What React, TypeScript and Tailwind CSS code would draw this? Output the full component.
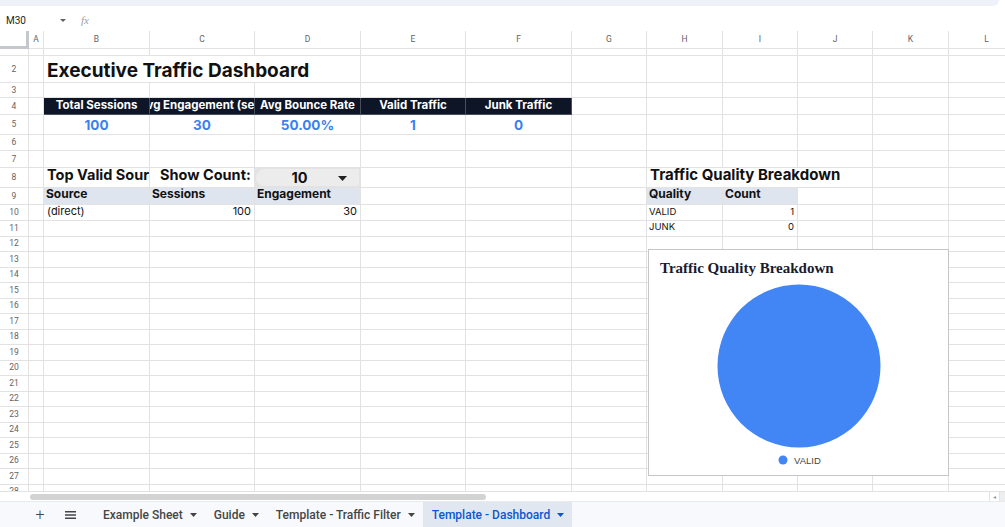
import React from "react";

const COLS = [15, 106, 105, 106, 105, 106, 75, 76, 75, 75, 76, 76];
const LETTERS = ["A", "B", "C", "D", "E", "F", "G", "H", "I", "J", "K", "L"];

type Cell = { span?: number; node?: React.ReactNode; cls?: string };

const FONT = "font-['Inter','Open_Sans',sans-serif]";

function Row({
  h,
  label,
  cells = {},
}: {
  h: number;
  label: string;
  cells?: Record<number, Cell>;
}) {
  const out: React.ReactNode[] = [];
  for (let i = 0; i < COLS.length; i++) {
    const c = cells[i];
    const span = c?.span ?? 1;
    let w = 0;
    for (let k = i; k < i + span; k++) w += COLS[k];
    out.push(
      <div
        key={i}
        style={{ width: w }}
        className={`shrink-0 border-r border-b border-[#e2e2e2] flex overflow-hidden whitespace-nowrap ${
          c?.cls ?? ""
        }`}
      >
        {c?.node}
      </div>
    );
    i += span - 1;
  }
  return (
    <div style={{ height: h }} className="flex shrink-0">
      <div className="w-[29px] shrink-0 border-r border-b border-[#e2e2e2] flex items-center justify-center text-[8.5px] text-[#5f6368] font-['Roboto',sans-serif] overflow-hidden">
        {label}
      </div>
      {out}
    </div>
  );
}

const kpiHead = (t: string) => ({
  node: <span>{t}</span>,
  cls: "bg-[#0d1527] text-white font-bold text-[11.5px] items-center justify-center border-r-[#4a4f5c] border-b-[#4a4f5c]",
});
const kpiVal = (t: string) => ({
  node: <span>{t}</span>,
  cls: "text-[#3b7ff0] font-bold text-[13.5px] items-center justify-center pt-[1px]",
});
const tblHead = (t: string) => ({
  node: <span className="pl-[2px]">{t}</span>,
  cls: "bg-[#dfe5ee] font-bold text-[12px] text-[#111] items-end pb-[1px]",
});

export default function App() {
  const small: Record<number, Cell> = {};
  return (
    <div className={`w-[1005px] h-[527px] overflow-hidden bg-white flex flex-col ${FONT}`}>
      {/* toolbar remnant */}
      <div className="h-[9px] shrink-0 bg-white">
        <div className="h-[6px] mr-[6px] bg-[#eef2f8] rounded-br-[8px]" />
      </div>
      {/* formula bar */}
      <div className="h-[22px] shrink-0 flex items-center font-['Roboto',sans-serif] text-[#1f1f1f]">
        <div className="w-[58px] pl-[6px] text-[10px]">M30</div>
        <svg width="8" height="5" viewBox="0 0 8 5" className="ml-[1px]">
          <path d="M1 1 L4 4 L7 1 Z" fill="#5f6368" />
        </svg>
        <span className="ml-[14px] text-[11px] italic text-[#9aa0a6] font-['Liberation_Serif',serif]">fx</span>
      </div>

      {/* grid */}
      <div className="h-[460px] shrink-0 relative overflow-hidden">
        {/* column headers */}
        <div className="flex h-[18px]">
          <div className="w-[29px] shrink-0 border-r-[3px] border-b-[3px] border-[#c4c7cc] bg-white" />
          {COLS.map((w, i) => (
            <div
              key={i}
              style={{ width: w }}
              className="shrink-0 border-r border-b border-[#e2e2e2] flex items-center justify-center text-[8.5px] text-[#5f6368] font-['Roboto',sans-serif]"
            >
              {LETTERS[i]}
            </div>
          ))}
        </div>
        <Row h={7} label="" />
        <Row
          h={27}
          label="2"
          cells={{
            1: {
              span: 3,
              node: <span className="pl-[3px] text-[19px] font-bold text-[#111] leading-none">Executive Traffic Dashboard</span>,
              cls: "items-center pt-[2px]",
            },
          }}
        />
        <Row h={15} label="3" />
        <Row
          h={17}
          label="4"
          cells={{
            1: kpiHead("Total Sessions"),
            2: kpiHead("Avg Engagement (sec)"),
            3: kpiHead("Avg Bounce Rate"),
            4: kpiHead("Valid Traffic"),
            5: kpiHead("Junk Traffic"),
          }}
        />
        <Row
          h={20}
          label="5"
          cells={{
            1: kpiVal("100"),
            2: kpiVal("30"),
            3: kpiVal("50.00%"),
            4: kpiVal("1"),
            5: kpiVal("0"),
          }}
        />
        <Row h={16} label="6" />
        <Row h={17} label="7" />
        <Row
          h={20}
          label="8"
          cells={{
            1: {
              node: <span className="pl-[3px]">Top Valid Sources</span>,
              cls: "font-bold text-[14.5px] text-[#111] items-end pb-[1px]",
            },
            2: {
              node: <span className="pl-[10px]">Show Count:</span>,
              cls: "font-bold text-[14.5px] text-[#111] items-end pb-[1px]",
            },
            3: {
              node: (
                <div className="flex-1 m-[1px] rounded-l-[9px] bg-[#ececec] flex items-center relative">
                  <span className="absolute left-0 right-[16px] text-center font-bold text-[14.5px] text-[#111]">10</span>
                  <svg width="9" height="5" viewBox="0 0 9 5" className="absolute right-[12px] top-[7px]">
                    <path d="M0 0 L9 0 L4.5 5 Z" fill="#222" />
                  </svg>
                </div>
              ),
              cls: "bg-[#e3e3e3]",
            },
            7: {
              span: 3,
              node: <span className="pl-[3px]">Traffic Quality Breakdown</span>,
              cls: "font-bold text-[15px] text-[#111] items-end pb-[1px]",
            },
          }}
        />
        <Row
          h={17}
          label="9"
          cells={{
            1: tblHead("Source"),
            2: tblHead("Sessions"),
            3: tblHead("Engagement"),
            7: tblHead("Quality"),
            8: tblHead("Count"),
          }}
        />
        <Row
          h={16}
          label="10"
          cells={{
            1: { node: <span className="pl-[3px]">(direct)</span>, cls: "text-[11px] text-[#111] items-end pb-[1px]" },
            2: { node: <span className="pr-[3px]">100</span>, cls: "text-[11px] text-[#111] items-end justify-end pb-[1px]" },
            3: { node: <span className="pr-[3px]">30</span>, cls: "text-[11px] text-[#111] items-end justify-end pb-[1px]" },
            7: { node: <span className="pl-[2px]">VALID</span>, cls: "text-[9.5px] text-[#111] items-end pb-[1px]" },
            8: { node: <span className="pr-[3px]">1</span>, cls: "text-[9.5px] text-[#111] items-end justify-end pb-[1px]" },
          }}
        />
        <Row
          h={15.5}
          label="11"
          cells={{
            7: { node: <span className="pl-[2px]">JUNK</span>, cls: "text-[9.5px] text-[#111] items-end pb-[1px]" },
            8: { node: <span className="pr-[3px]">0</span>, cls: "text-[9.5px] text-[#111] items-end justify-end pb-[1px]" },
          }}
        />
        {Array.from({ length: 17 }, (_, k) => (
          <Row key={k} h={15.5} label={String(12 + k)} cells={small} />
        ))}

        {/* floating chart */}
        <div className="absolute left-[648px] top-[218px] w-[301px] h-[227px] bg-white border border-[#c6c6c6]">
          <div className="absolute left-[11px] top-[7px] text-[15px] font-bold text-[#1a1a2e] font-['Liberation_Serif',serif]">
            Traffic Quality Breakdown
          </div>
          <svg width="301" height="227" className="absolute left-0 top-0">
            <circle cx="150" cy="116" r="81.5" fill="#4285f4" />
            <circle cx="134" cy="210" r="4.5" fill="#4285f4" />
          </svg>
          <div className="absolute left-[145px] top-[204px] text-[9.5px] text-[#444] font-['Liberation_Sans',sans-serif]">
            VALID
          </div>
        </div>
      </div>

      {/* horizontal scrollbar */}
      <div className="h-[10px] shrink-0 border-t border-[#e2e2e2] flex items-center relative">
        <div className="ml-[30px] w-[456px] h-[6px] rounded-full bg-[#d3d3d3]" />
        <div className="absolute right-[0px] top-0 h-full flex">
          <div className="w-[10px] h-full border-l border-[#e2e2e2] flex items-center justify-center text-[6px] text-[#999]">◂</div>
          <div className="w-[6px] h-full border-l border-[#e2e2e2] bg-[#eee]" />
        </div>
      </div>

      {/* tab bar */}
      <div className="flex-1 bg-[#f8f9fc] border-t border-[#e8eaed] flex items-stretch font-['Roboto',sans-serif] text-[12px] text-[#444746]">
        <div className="w-[26px]" />
        <div className="w-[28px] flex items-center justify-center text-[16px] font-light text-[#444]">+</div>
        <div className="w-[32px] flex items-center justify-center">
          <svg width="11" height="8" viewBox="0 0 11 8">
            <path d="M0 0.75 H11 M0 4 H11 M0 7.25 H11" stroke="#444" strokeWidth="1.4" />
          </svg>
        </div>
        <div className="w-[8px]" />
        {[
          ["Example Sheet", false],
          ["Guide", false],
          ["Template - Traffic Filter", false],
          ["Template - Dashboard", true],
        ].map(([t, active]) => (
          <div
            key={t as string}
            className={`flex items-center pl-[9px] pr-[8px] gap-[7px] font-medium ${
              active ? "bg-[#e1e7f0] text-[#0b57d0]" : ""
            }`}
          >
            <span>{t as string}</span>
            <svg width="7" height="4" viewBox="0 0 7 4">
              <path d="M0 0 H7 L3.5 4 Z" fill={active ? "#0b57d0" : "#444"} />
            </svg>
          </div>
        ))}
      </div>
    </div>
  );
}
